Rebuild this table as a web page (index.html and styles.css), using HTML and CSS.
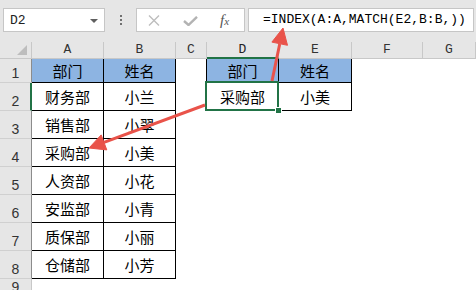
FILE: index.html
```html
<!DOCTYPE html>
<html lang="zh">
<head>
<meta charset="utf-8">
<link rel="stylesheet" href="styles.css">
</head>
<body>
<div class="page">
  <div class="toolbar">
    <div class="namebox">
      <span class="name">D2</span>
      <svg class="dd" width="8" height="4" viewBox="0 0 8 4"><path d="M0 0H8L4 4Z" fill="#5f5f5f"/></svg>
    </div>
    <div class="dots"><i></i><i></i><i></i></div>
    <div class="fxbox">
      <svg class="ico-x" width="12" height="11" viewBox="0 0 12 11"><path d="M1 0.5L11 10.5M11 0.5L1 10.5" stroke="#bdbdbd" stroke-width="1.4" fill="none"/></svg>
      <svg class="ico-ok" width="15" height="10" viewBox="0 0 15 10"><path d="M1 5L5.5 9L14 0.8" stroke="#b3b3b3" stroke-width="2.4" fill="none"/></svg>
      <span class="fx">f<span class="fxx">x</span></span>
    </div>
    <div class="formula">=INDEX(A:A,MATCH(E2,B:B,))</div>
  </div>

  <div class="sheet">
    <div class="corner"><svg width="10" height="10" viewBox="0 0 10 10"><path d="M10 0V10H0Z" fill="#bdbdbd"/></svg></div>
    <div class="ch">A</div>
    <div class="ch">B</div>
    <div class="ch">C</div>
    <div class="ch active">D</div>
    <div class="ch">E</div>
    <div class="ch">F</div>
    <div class="ch">G</div>

    <div class="rh">1</div>
    <div class="cell hd">部门</div>
    <div class="cell hd">姓名</div>
    <div class="cell lb"></div>
    <div class="cell hd">部门</div>
    <div class="cell hd">姓名</div>
    <div class="cell"></div>
    <div class="cell"></div>

    <div class="rh cur">2</div>
    <div class="cell td">财务部</div>
    <div class="cell td">小兰</div>
    <div class="cell lb"></div>
    <div class="cell td sel">采购部<span class="handle"></span></div>
    <div class="cell td">小美</div>
    <div class="cell"></div>
    <div class="cell"></div>

    <div class="rh">3</div>
    <div class="cell td">销售部</div>
    <div class="cell td">小翠</div>
    <div class="cell"></div><div class="cell"></div><div class="cell"></div><div class="cell"></div><div class="cell"></div>

    <div class="rh">4</div>
    <div class="cell td">采购部</div>
    <div class="cell td">小美</div>
    <div class="cell"></div><div class="cell"></div><div class="cell"></div><div class="cell"></div><div class="cell"></div>

    <div class="rh">5</div>
    <div class="cell td">人资部</div>
    <div class="cell td">小花</div>
    <div class="cell"></div><div class="cell"></div><div class="cell"></div><div class="cell"></div><div class="cell"></div>

    <div class="rh">6</div>
    <div class="cell td">安监部</div>
    <div class="cell td">小青</div>
    <div class="cell"></div><div class="cell"></div><div class="cell"></div><div class="cell"></div><div class="cell"></div>

    <div class="rh">7</div>
    <div class="cell td">质保部</div>
    <div class="cell td">小丽</div>
    <div class="cell"></div><div class="cell"></div><div class="cell"></div><div class="cell"></div><div class="cell"></div>

    <div class="rh">8</div>
    <div class="cell td">仓储部</div>
    <div class="cell td">小芳</div>
    <div class="cell"></div><div class="cell"></div><div class="cell"></div><div class="cell"></div><div class="cell"></div>

    <div class="rh last">9</div>
    <div class="cell"></div><div class="cell"></div><div class="cell"></div><div class="cell"></div><div class="cell"></div><div class="cell"></div><div class="cell"></div>
  </div>

  <svg class="arrows" width="476" height="290" viewBox="0 0 476 290">
    <g fill="#e9534a" stroke="#e9534a">
      <line x1="272" y1="81" x2="279.7" y2="44" stroke-width="3"/>
      <path d="M283 28L287.5 45.3L271.9 42.1Z" stroke-width="1" stroke-linejoin="round"/>
      <line x1="205" y1="105" x2="104" y2="142.4" stroke-width="3"/>
      <path d="M89 148L101.2 134.9L106.8 149.9Z" stroke-width="1" stroke-linejoin="round"/>
    </g>
  </svg>
</div>
</body>
</html>
```

FILE: styles.css
```css
* { box-sizing: border-box; }

html, body {
  margin: 0;
  padding: 0;
  background: #ffffff;
}

.page {
  position: relative;
  width: 476px;
  height: 290px;
  overflow: hidden;
  font-family: "Noto Sans CJK SC", "Liberation Sans", sans-serif;
}

/* ---------- formula bar ---------- */
.toolbar {
  display: flex;
  height: 42px;
  padding: 8px 0 0 3px;
  background: #e6e6e6;
}

.namebox {
  width: 102px;
  height: 24px;
  background: #fff;
  border: 1px solid #c6c6c6;
  display: flex;
  align-items: center;
  justify-content: space-between;
  padding: 0 6px 0 6px;
}

.name {
  font-family: "Liberation Mono", monospace;
  font-size: 13px;
  color: #222;
  padding-top: 1px;
}

.dd { margin-top: 1px; }

.dots {
  width: 31px;
  height: 24px;
  display: flex;
  flex-direction: column;
  align-items: center;
  justify-content: center;
  gap: 2px;
}

.dots i {
  display: block;
  width: 2px;
  height: 2px;
  background: #707070;
}

.fxbox {
  width: 109px;
  height: 24px;
  background: #fff;
  border: 1px solid #c6c6c6;
  display: flex;
  align-items: center;
  padding-left: 11px;
}

.ico-x { margin-right: 23px; }
.ico-ok { margin-right: 22px; margin-top: 1px; }

.fx {
  font-family: "Liberation Serif", serif;
  font-style: italic;
  font-size: 15px;
  color: #555;
  line-height: 1;
}

.fxx { font-size: 11px; }

.formula {
  flex: 1;
  height: 24px;
  margin: 0 2px 0 3px;
  background: #fff;
  border: 1px solid #c6c6c6;
  padding-left: 14px;
  font-family: "Liberation Mono", monospace;
  font-size: 13px;
  line-height: 22px;
  color: #000;
  white-space: nowrap;
  overflow: hidden;
}

/* ---------- sheet grid ---------- */
.sheet {
  display: grid;
  grid-template-columns: 32px 72px 72px 31px 72px 73px 71px 53px;
  grid-template-rows: 17px 24px repeat(7, 28px) 18px;
}

.corner {
  background: #e6e6e6;
  border-right: 1px solid #c8c8c8;
  border-bottom: 1px solid #c8c8c8;
  display: flex;
  align-items: flex-end;
  justify-content: flex-end;
  padding: 0 4px 3px 0;
}

.corner svg { display: block; }

.ch {
  background: #e6e6e6;
  border-right: 1px solid #c8c8c8;
  border-bottom: 1px solid #c8c8c8;
  font-family: "Liberation Mono", monospace;
  font-size: 13px;
  color: #333;
  display: flex;
  align-items: flex-end;
  justify-content: center;
  line-height: 14px;
  padding-bottom: 1px;
}

.ch.active {
  border-bottom: 2px solid #217346;
  color: #222;
  padding-bottom: 0;
}

.rh {
  background: #e6e6e6;
  border-right: 1px solid #8c8c8c;
  border-bottom: 1px solid #d0d0d0;
  font-family: "Liberation Sans", sans-serif;
  font-size: 14px;
  color: #333;
  display: flex;
  align-items: flex-end;
  justify-content: center;
  line-height: 14px;
  padding-bottom: 2px;
}

.rh.cur {
  border-right: 2px solid #217346;
  padding-left: 1px;
}

.rh.last {
  border-right-color: #c8c8c8;
}

.cell {
  display: flex;
  align-items: center;
  justify-content: center;
  font-size: 15px;
  color: #000;
  line-height: 1;
  padding-bottom: 1px;
  background: #fff;
}

.cell.hd {
  background: #8db4e2;
  border-right: 1px solid #000;
  border-bottom: 1px solid #000;
}

.cell.td {
  border-right: 1px solid #000;
  border-bottom: 1px solid #000;
}

.cell.lb {
  border-right: 1px solid #000;
}

.cell.sel {
  position: relative;
}

.cell.sel::after {
  content: "";
  position: absolute;
  left: -2px;
  top: -2px;
  right: -1px;
  bottom: -1px;
  border: 2px solid #217346;
}

.handle {
  position: absolute;
  right: -4px;
  bottom: -4px;
  width: 7px;
  height: 7px;
  background: #217346;
  border: 1px solid #fff;
  z-index: 1;
}

.arrows {
  position: absolute;
  left: 0;
  top: 0;
  pointer-events: none;
}
```
